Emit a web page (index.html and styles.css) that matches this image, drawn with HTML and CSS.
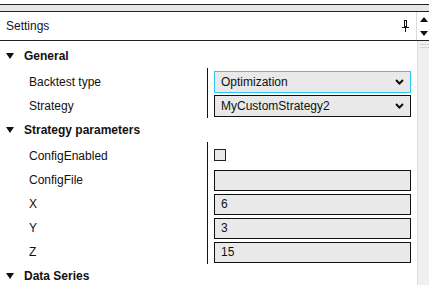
FILE: index.html
```html
<!DOCTYPE html>
<html lang="en">
<head>
    <meta charset="UTF-8">
    <title>Settings</title>
    <link rel="stylesheet" href="styles.css">
</head>
<body>
    <div class="panel">
        <div class="topbar"></div>

        <div class="header">
            <span class="title">Settings</span>
            <svg class="pin" width="7" height="12" viewBox="0 0 7 12">
                <rect x="2.5" y="0.5" width="2" height="6" fill="none" stroke="#111"/>
                <line x1="0" y1="7.5" x2="7" y2="7.5" stroke="#111"/>
                <line x1="3.5" y1="8" x2="3.5" y2="12" stroke="#111"/>
            </svg>
            <div class="spin">
                <span class="arrow-up"></span>
                <span class="arrow-down"></span>
            </div>
        </div>

        <div class="content">
            <div class="list">
                <div class="cat"><span class="tri"></span><b>General</b></div>
                <div class="group">
                    <div class="label">Backtest type</div>
                    <div class="value">
                        <div class="field select focused">
                            <span>Optimization</span>
                            <svg class="chev" width="9" height="6" viewBox="0 0 9 6"><polyline points="1,1 4.5,4.5 8,1" fill="none" stroke="#111" stroke-width="2"/></svg>
                        </div>
                    </div>
                    <div class="label">Strategy</div>
                    <div class="value">
                        <div class="field select">
                            <span>MyCustomStrategy2</span>
                            <svg class="chev" width="9" height="6" viewBox="0 0 9 6"><polyline points="1,1 4.5,4.5 8,1" fill="none" stroke="#111" stroke-width="2"/></svg>
                        </div>
                    </div>
                </div>

                <div class="cat"><span class="tri"></span><b>Strategy parameters</b></div>
                <div class="group">
                    <div class="label">ConfigEnabled</div>
                    <div class="value"><div class="check"></div></div>
                    <div class="label">ConfigFile</div>
                    <div class="value"><div class="field"></div></div>
                    <div class="label">X</div>
                    <div class="value"><div class="field">6</div></div>
                    <div class="label">Y</div>
                    <div class="value"><div class="field">3</div></div>
                    <div class="label">Z</div>
                    <div class="value"><div class="field">15</div></div>
                </div>

                <div class="cat"><span class="tri"></span><b>Data Series</b></div>
            </div>
            <div class="scrollbar"><div class="grip"></div></div>
        </div>
    </div>
</body>
</html>
```

FILE: styles.css
```css
body {
    margin: 0;
    font-family: "Liberation Sans", Arial, sans-serif;
    font-size: 12px;
    color: #111;
    background: #fff;
}

.panel {
    width: 429px;
    height: 285px;
    overflow: hidden;
    display: flex;
    flex-direction: column;
}

.topbar {
    flex-shrink: 0;
    margin-top: 4px;
    height: 6px;
    background: #e6e6e6;
    border-top: 1px solid #222;
    border-bottom: 1px solid #222;
}

.header {
    flex-shrink: 0;
    height: 28px;
    display: flex;
    align-items: center;
    border-bottom: 1px solid #222;
}

.title {
    padding-left: 6px;
    color: #14142a;
}

.pin {
    margin-left: auto;
    margin-right: 7px;
}

.spin {
    width: 11px;
    height: 28px;
    border-left: 1px solid #dcdcdc;
    display: flex;
    flex-direction: column;
    align-items: center;
    justify-content: center;
    gap: 9px;
    padding-left: 1px;
}

.arrow-up {
    width: 0;
    height: 0;
    border-left: 4px solid transparent;
    border-right: 4px solid transparent;
    border-bottom: 5px solid #111;
}

.arrow-down {
    width: 0;
    height: 0;
    border-left: 4px solid transparent;
    border-right: 4px solid transparent;
    border-top: 5px solid #111;
}

.content {
    flex: 1 0 auto;
    display: flex;
}

.list {
    width: 417px;
    padding-top: 3px;
}

.scrollbar {
    flex: 1;
    background: #f0f0f0;
    border-left: 1px solid #dcdcdc;
    padding-top: 3px;
}

.grip {
    margin-left: 2px;
    height: 2px;
    border-top: 1px solid #d4d4d4;
    border-bottom: 1px solid #d4d4d4;
}

.cat {
    height: 24px;
    display: flex;
    align-items: center;
    padding-left: 6px;
    gap: 10px;
}

.tri {
    width: 0;
    height: 0;
    border-left: 4px solid transparent;
    border-right: 4px solid transparent;
    border-top: 6px solid #111;
}

.group {
    display: grid;
    grid-template-columns: 208px 1fr;
    grid-auto-rows: 24px;
    padding-top: 2px;
    background: linear-gradient(#111, #111) 207px 0 / 1px 100% no-repeat;
}

.label {
    display: flex;
    align-items: center;
    padding-left: 29px;
}

.value {
    display: flex;
    align-items: center;
    padding: 0 6px;
}

.field {
    flex: 1;
    height: 21px;
    box-sizing: border-box;
    border: 1px solid #111;
    background: #e8e9e8;
    display: flex;
    align-items: center;
    padding-left: 6px;
}

.select {
    height: 22px;
    justify-content: space-between;
    padding-right: 6px;
}

.focused {
    border-color: #2dc8ef;
}

.check {
    width: 12px;
    height: 12px;
    box-sizing: border-box;
    border: 1px solid #222;
    background: #e8e9e8;
    margin-top: -3px;
}
```
